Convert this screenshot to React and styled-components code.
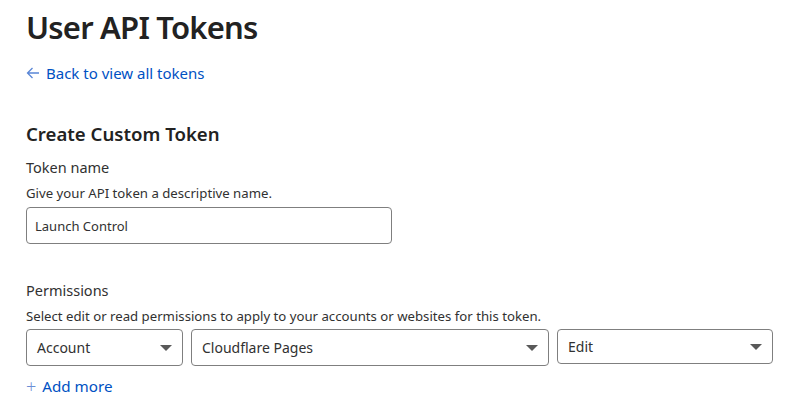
import styled, { createGlobalStyle } from "styled-components";

const GlobalStyle = createGlobalStyle`
  body {
    margin: 0;
    background: #ffffff;
    font-family: "Noto Sans", "Open Sans", sans-serif;
    color: #313131;
  }
`;

const Page = styled.div`
  padding: 6px 26px 0 26px;
  width: 809px;
  box-sizing: border-box;
`;

const Title = styled.h1`
  margin: 0;
  font-size: 31px;
  line-height: 42px;
  font-weight: 600;
  color: #222222;
  letter-spacing: -0.8px;
`;

const BackLink = styled.a`
  display: flex;
  align-items: center;
  gap: 6px;
  margin-top: 15px;
  font-size: 15px;
  line-height: 20px;
  color: #0051c3;
  text-decoration: none;
`;

const SectionTitle = styled.h2`
  margin: 38px 0 0 0;
  font-size: 18.6px;
  line-height: 26px;
  font-weight: 600;
  color: #222222;
`;

const Label = styled.div`
  margin-top: ${(p) => p.$top || 8}px;
  font-size: 14.5px;
  line-height: 20px;
  color: #313131;
`;

const Help = styled.div`
  margin-top: 7px;
  font-size: 13.2px;
  line-height: 18px;
  color: #313131;
`;

const TextInput = styled.div`
  margin-top: 5px;
  width: 366px;
  height: 37px;
  box-sizing: border-box;
  border: 1px solid #7f7f7f;
  border-radius: 4px;
  display: flex;
  align-items: center;
  padding: 0 8px;
  font-size: 13px;
  color: #313131;
`;

const SelectRow = styled.div`
  display: flex;
  gap: 8px;
  margin-top: 4px;
  align-items: flex-start;
`;

const Select = styled.div`
  width: ${(p) => p.$width}px;
  height: ${(p) => p.$height || 37}px;
  box-sizing: border-box;
  border: 1px solid #7f7f7f;
  border-radius: 4px;
  display: flex;
  align-items: center;
  justify-content: space-between;
  padding: 0 10px 0 10px;
  font-size: 14px;
  color: #313131;
`;

const Caret = styled.span`
  width: 0;
  height: 0;
  border-left: 6px solid transparent;
  border-right: 6px solid transparent;
  border-top: 6px solid #595959;
`;

const AddMore = styled.a`
  display: flex;
  align-items: center;
  gap: 6px;
  margin-top: 10px;
  font-size: 15.2px;
  line-height: 20px;
  color: #0051c3;
  text-decoration: none;
`;

const Plus = styled.span`
  font-size: 18px;
  color: #6b8fd6;
  font-weight: 300;
`;

const ArrowLeft = () => (
  <svg width="14" height="12" viewBox="0 0 14 12" fill="none" stroke="#5a86d6" strokeWidth="1.3">
    <path d="M13 6H1.5M6.5 1L1.5 6l5 5" />
  </svg>
);

export default function App() {
  return (
    <>
      <GlobalStyle />
      <Page>
        <Title>User API Tokens</Title>
        <BackLink href="#">
          <ArrowLeft />
          Back to view all tokens
        </BackLink>
        <SectionTitle>Create Custom Token</SectionTitle>
        <Label $top={10}>Token name</Label>
        <Help>Give your API token a descriptive name.</Help>
        <TextInput>Launch Control</TextInput>
        <Label $top={36}>Permissions</Label>
        <Help>Select edit or read permissions to apply to your accounts or websites for this token.</Help>
        <SelectRow>
          <Select $width={157}>
            Account
            <Caret />
          </Select>
          <Select $width={358}>
            Cloudflare Pages
            <Caret />
          </Select>
          <Select $width={216} $height={35}>
            Edit
            <Caret />
          </Select>
        </SelectRow>
        <AddMore href="#">
          <Plus>+</Plus>
          Add more
        </AddMore>
      </Page>
    </>
  );
}
